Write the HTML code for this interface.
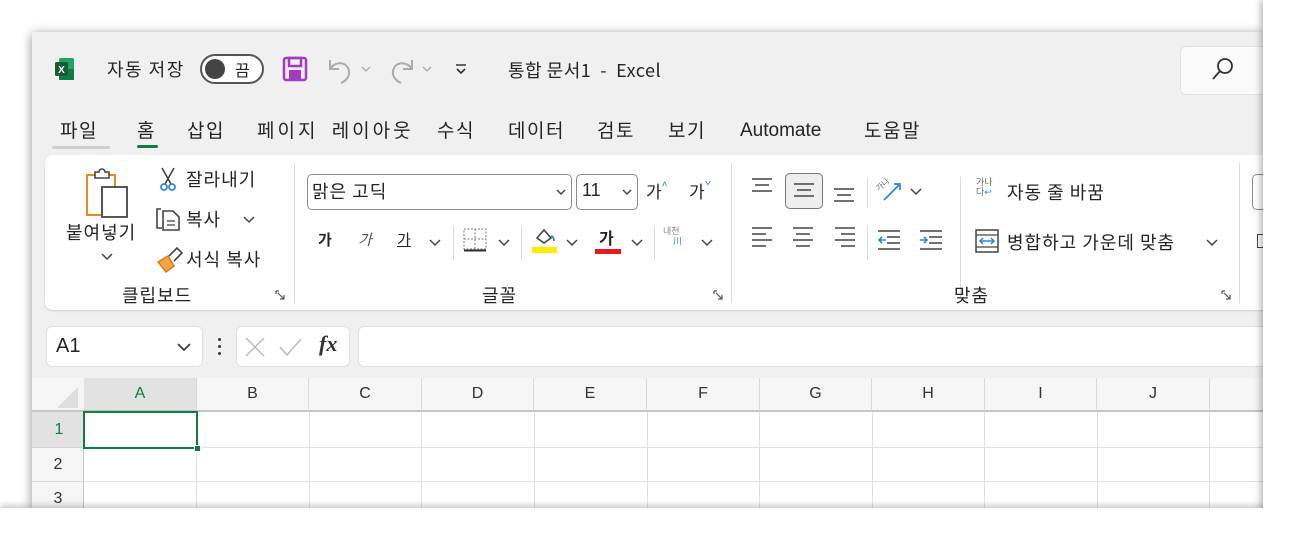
<!DOCTYPE html>
<html><head><meta charset="utf-8"><style>
*{margin:0;padding:0;box-sizing:border-box}
body{width:1295px;height:541px;background:#fff;position:relative;overflow:hidden;font-family:"Liberation Sans","Noto Sans CJK KR",sans-serif;color:#242424}
.a{position:absolute;white-space:nowrap}
.win{position:absolute;left:32px;top:32px;width:1231px;height:476px;background:#f0f0f0;box-shadow:0 2px 10px rgba(0,0,0,.45);overflow:hidden}
.k{font-family:"Noto Sans CJK KR","Liberation Sans",sans-serif}
.t{font-size:19px;top:116px;letter-spacing:1.5px}
.rib{position:absolute;left:45px;top:155px;width:1240px;height:155px;background:#fff;border-radius:8px;box-shadow:0 1px 2px rgba(0,0,0,.15)}
.sep{position:absolute;width:1px;background:#dcdcdc}
.lbl{font-size:18px;top:282px;letter-spacing:1px}
.l16{font-size:18px;letter-spacing:1px}
.col{position:absolute;top:378px;height:34px;border-right:1px solid #d8d8d8;text-align:center;line-height:32px;font-size:16px;color:#333;background:#f5f5f5;border-bottom:2px solid #c6c6c6}
.vl{position:absolute;top:412px;height:96px;width:1px;background:#e1e1e1}
.hl{position:absolute;left:84px;width:1180px;height:1px;background:#e1e1e1}
</style></head><body>
<div class="win"></div>
<!-- title bar -->
<svg class="a" style="left:55px;top:57px" width="20" height="24" viewBox="0 0 20 24"><rect x="4" y="1" width="15" height="22" rx="2" fill="#21a366"/><rect x="4" y="12" width="15" height="11" fill="#107c41"/><rect x="0" y="5" width="13" height="14" rx="1.5" fill="#185c37"/><text x="6.5" y="16" font-size="10" fill="#fff" text-anchor="middle" font-family="Liberation Sans" font-weight="bold">X</text></svg>
<div class="a k" style="left:107px;top:56px;font-size:18px;letter-spacing:1.5px">자동 저장</div>
<div class="a" style="left:200px;top:54px;width:64px;height:30px;border:2px solid #555;border-radius:15px;background:#fff"></div>
<div class="a" style="left:205px;top:59px;width:20px;height:20px;border-radius:10px;background:#444"></div>
<div class="a k" style="left:235px;top:57px;font-size:16px">끔</div>
<svg class="a" style="left:282px;top:56px" width="26" height="26" viewBox="0 0 26 26"><rect x="2" y="2" width="22" height="22" rx="2" fill="none" stroke="#a33bbd" stroke-width="2.5"/><rect x="7" y="2" width="12" height="8" fill="none" stroke="#a33bbd" stroke-width="2.5"/><rect x="7" y="14" width="12" height="10" fill="#a33bbd"/></svg>
<svg class="a" style="left:326px;top:56px" width="30" height="28" viewBox="0 0 30 28"><path d="M4 4v9h9" fill="none" stroke="#aaa" stroke-width="2"/><path d="M4 13c5-8 17-8 19 2c1 5-3 10-8 12" fill="none" stroke="#aaa" stroke-width="2"/></svg>
<svg class="a" style="left:361px;top:66px" width="10" height="7"><path d="M1 1l4 4 4-4" fill="none" stroke="#aaa" stroke-width="1.3"/></svg>
<svg class="a" style="left:386px;top:56px" width="30" height="28" viewBox="0 0 30 28"><path d="M26 4v9h-9" fill="none" stroke="#aaa" stroke-width="2"/><path d="M26 13c-5-8-17-8-19 2c-1 5 3 10 8 12" fill="none" stroke="#aaa" stroke-width="2"/></svg>
<svg class="a" style="left:422px;top:66px" width="10" height="7"><path d="M1 1l4 4 4-4" fill="none" stroke="#aaa" stroke-width="1.3"/></svg>
<svg class="a" style="left:454px;top:63px" width="14" height="14" viewBox="0 0 14 14"><path d="M2 2h10M3 6l4 4 4-4" fill="none" stroke="#333" stroke-width="1.6"/></svg>
<div class="a k" style="left:508px;top:57px;font-size:18px;letter-spacing:0.5px">통합 문서1 &nbsp;- &nbsp;Excel</div>
<div class="a" style="left:1180px;top:46px;width:100px;height:49px;background:#fafafa;border:1px solid #e2e2e2;border-radius:6px"></div>
<svg class="a" style="left:1210px;top:56px" width="26" height="26" viewBox="0 0 26 26"><circle cx="15" cy="10" r="7" fill="none" stroke="#333" stroke-width="1.8"/><path d="M10 15l-7 8" stroke="#333" stroke-width="1.8"/></svg>
<!-- tabs -->
<div class="a k t" style="left:60px">파일</div>
<div class="a" style="left:52px;top:146px;width:58px;height:3px;background:#cfcfcf;border-radius:2px"></div>
<div class="a k t" style="left:137px">홈</div>
<div class="a" style="left:137px;top:145px;width:21px;height:3px;background:#107c41;border-radius:2px"></div>
<div class="a k t" style="left:187px">삽입</div>
<div class="a k t" style="left:257px;word-spacing:6px;letter-spacing:3px">페이지 레이아웃</div>
<div class="a k t" style="left:437px">수식</div>
<div class="a k t" style="left:508px">데이터</div>
<div class="a k t" style="left:597px">검토</div>
<div class="a k t" style="left:668px">보기</div>
<div class="a t" style="left:740px;top:120px;letter-spacing:0">Automate</div>
<div class="a k t" style="left:864px">도움말</div>
<!-- ribbon -->
<div class="rib"></div>
<div class="sep" style="left:294px;top:163px;height:140px"></div>
<div class="sep" style="left:731px;top:163px;height:140px"></div>
<div class="sep" style="left:960px;top:177px;height:120px"></div>
<div class="sep" style="left:1239px;top:163px;height:140px"></div>
<!-- clipboard -->
<svg class="a" style="left:84px;top:167px" width="48" height="52" viewBox="0 0 48 52"><rect x="3" y="8" width="28" height="40" fill="#fff" stroke="#e98a1e" stroke-width="2"/><path d="M11 8v-3h4a3 3 0 0 1 6 0h4v6h-14z" fill="#fff" stroke="#444" stroke-width="1.6"/><rect x="18" y="20" width="25" height="30" fill="#fff" stroke="#444" stroke-width="1.8"/></svg>
<div class="a k l16" style="left:66px;top:219px">붙여넣기</div>
<svg class="a" style="left:101px;top:253px" width="12" height="8"><path d="M1 1l5 5 5-5" fill="none" stroke="#444" stroke-width="1.5"/></svg>
<svg class="a" style="left:158px;top:166px" width="20" height="26" viewBox="0 0 20 26"><path d="M4 2l9 16M16 2l-9 16" stroke="#444" stroke-width="1.6"/><circle cx="6" cy="21" r="3" fill="none" stroke="#2b88d8" stroke-width="1.8"/><circle cx="14" cy="21" r="3" fill="none" stroke="#2b88d8" stroke-width="1.8"/></svg>
<div class="a k l16" style="left:186px;top:166px">잘라내기</div>
<svg class="a" style="left:155px;top:206px" width="28" height="26" viewBox="0 0 28 26"><path d="M6 3h-4v19h5" fill="none" stroke="#444" stroke-width="1.6"/><path d="M8 5h10l6 6v13h-16z" fill="none" stroke="#444" stroke-width="1.6"/><path d="M12 15h8M12 19h8" stroke="#444" stroke-width="1.3"/></svg>
<div class="a k l16" style="left:186px;top:206px">복사</div>
<svg class="a" style="left:243px;top:216px" width="12" height="8"><path d="M1 1l5 5 5-5" fill="none" stroke="#444" stroke-width="1.5"/></svg>
<svg class="a" style="left:156px;top:246px" width="28" height="28" viewBox="0 0 28 28"><path d="M2 16l10-6 6 10-8 6z" fill="#f3a447" stroke="#e07a0e" stroke-width="1.5"/><path d="M13 10l8-8 5 5-8 8" fill="none" stroke="#444" stroke-width="1.6"/></svg>
<div class="a k l16" style="left:186px;top:246px">서식 복사</div>
<div class="a k lbl" style="left:122px">클립보드</div>
<svg class="a" style="left:275px;top:290px" width="11" height="11"><path d="M1 1h3M1 1v3M3 3l6 6M9 5v4h-4" fill="none" stroke="#555" stroke-width="1.2"/></svg>
<!-- font -->
<div class="a" style="left:307px;top:174px;width:265px;height:36px;border:1px solid #8a8a8a;border-radius:5px"></div>
<div class="a k" style="left:312px;top:178px;font-size:18px;letter-spacing:1px">맑은 고딕</div>
<svg class="a" style="left:556px;top:189px" width="10" height="7"><path d="M1 1l4 4 4-4" fill="none" stroke="#444" stroke-width="1.5"/></svg>
<div class="a" style="left:576px;top:174px;width:62px;height:36px;border:1px solid #8a8a8a;border-radius:5px"></div>
<div class="a" style="left:582px;top:180px;font-size:18px">11</div>
<svg class="a" style="left:622px;top:189px" width="10" height="7"><path d="M1 1l4 4 4-4" fill="none" stroke="#444" stroke-width="1.5"/></svg>
<div class="a k" style="left:646px;top:178px;font-size:17px">가<span style="font-size:11px;color:#2b88d8;vertical-align:8px">^</span></div>
<div class="a k" style="left:689px;top:178px;font-size:17px">가<span style="font-size:11px;color:#2b88d8;vertical-align:8px">ˇ</span></div>
<div class="a k" style="left:318px;top:229px;font-size:15px;font-weight:bold">가</div>
<div class="a k" style="left:358px;top:229px;font-size:15px;font-style:italic;color:#555">가</div>
<div class="a k" style="left:397px;top:229px;font-size:15px;text-decoration:underline">가</div>
<svg class="a" style="left:429px;top:239px" width="12" height="8"><path d="M1 1l5 5 5-5" fill="none" stroke="#444" stroke-width="1.5"/></svg>
<div class="sep" style="left:453px;top:226px;height:34px"></div>
<svg class="a" style="left:463px;top:228px" width="24" height="24" viewBox="0 0 24 24"><rect x="1" y="1" width="22" height="20" fill="none" stroke="#777" stroke-width="1" stroke-dasharray="2 1.5"/><path d="M12 1v20M1 11h22" stroke="#777" stroke-dasharray="2 1.5"/><path d="M1 22.5h22" stroke="#333" stroke-width="2"/></svg>
<svg class="a" style="left:498px;top:239px" width="12" height="8"><path d="M1 1l5 5 5-5" fill="none" stroke="#444" stroke-width="1.5"/></svg>
<div class="sep" style="left:521px;top:226px;height:34px"></div>
<svg class="a" style="left:531px;top:226px" width="28" height="28" viewBox="0 0 28 28"><path d="M6 12l7-8 7 8-7 5z" fill="none" stroke="#444" stroke-width="1.6"/><path d="M20 10c2 0 3 3 3 5" stroke="#2b88d8" stroke-width="1.8" fill="none"/><rect x="1" y="21" width="25" height="6" fill="#ffeb00"/></svg>
<svg class="a" style="left:566px;top:239px" width="12" height="8"><path d="M1 1l5 5 5-5" fill="none" stroke="#444" stroke-width="1.5"/></svg>
<div class="a k" style="left:599px;top:225px;font-size:16px;font-weight:bold">가</div>
<div class="a" style="left:595px;top:249px;width:26px;height:5px;background:#e31b1b"></div>
<svg class="a" style="left:631px;top:239px" width="12" height="8"><path d="M1 1l5 5 5-5" fill="none" stroke="#444" stroke-width="1.5"/></svg>
<div class="sep" style="left:654px;top:226px;height:34px"></div>
<div class="a k" style="left:663px;top:226px;font-size:9px;color:#888;line-height:10px">내천<br><span style="color:#2b88d8;padding-left:10px">川</span></div>
<svg class="a" style="left:701px;top:239px" width="12" height="8"><path d="M1 1l5 5 5-5" fill="none" stroke="#444" stroke-width="1.5"/></svg>
<div class="a k lbl" style="left:482px">글꼴</div>
<svg class="a" style="left:713px;top:290px" width="11" height="11"><path d="M1 1h3M1 1v3M3 3l6 6M9 5v4h-4" fill="none" stroke="#555" stroke-width="1.2"/></svg>
<!-- alignment -->
<svg class="a" style="left:750px;top:176px" width="120" height="80" viewBox="0 0 120 80"><g stroke="#444" stroke-width="1.6"><path d="M2 3h20M5 9h14M2 15h20"/><path d="M84 13h20M87 19h14M84 25h20"/><path d="M2 52h20M2 58h14M2 64h20M2 70h14"/><path d="M43 52h20M46 58h14M43 64h20M46 70h14"/><path d="M85 52h20M91 58h14M85 64h20M91 70h14"/></g></svg>
<div class="a" style="left:785px;top:173px;width:38px;height:36px;border:1.5px solid #777;border-radius:5px;background:#eee"></div>
<svg class="a" style="left:792px;top:181px" width="24" height="20" viewBox="0 0 24 20"><path d="M2 3h20M5 9h14M2 15h20" stroke="#444" stroke-width="1.6"/></svg>
<svg class="a" style="left:876px;top:176px" width="34" height="28" viewBox="0 0 34 28"><text x="0" y="12" font-size="8" fill="#666" transform="rotate(-40 6 10)" font-family="Noto Sans CJK KR">가나</text><path d="M8 24l16-16M18 8h6v6" fill="none" stroke="#2b88d8" stroke-width="1.7"/></svg>
<svg class="a" style="left:910px;top:188px" width="12" height="8"><path d="M1 1l5 5 5-5" fill="none" stroke="#444" stroke-width="1.5"/></svg>
<svg class="a" style="left:876px;top:228px" width="70" height="26" viewBox="0 0 70 26"><g stroke="#444" stroke-width="1.6"><path d="M2 3h22M11 9h13M11 15h13M2 21h22"/><path d="M44 3h22M53 9h13M53 15h13M44 21h22"/></g><path d="M10 12h-7M6 9l-3 3 3 3" stroke="#2b88d8" stroke-width="1.6" fill="none"/><path d="M44 12h7M48 9l3 3-3 3" stroke="#2b88d8" stroke-width="1.6" fill="none"/></svg>
<div class="sep" style="left:867px;top:226px;height:34px"></div>
<div class="sep" style="left:867px;top:178px;height:30px"></div>
<div class="a k" style="left:976px;top:177px;font-size:9px;color:#666;line-height:10px">가나<br>다<span style="color:#2b88d8">↩</span></div>
<div class="a k l16" style="left:1007px;top:179px">자동 줄 바꿈</div>
<svg class="a" style="left:975px;top:229px" width="24" height="24" viewBox="0 0 24 24"><rect x="1" y="1" width="22" height="22" fill="none" stroke="#444" stroke-width="1.5"/><path d="M1 6h22M1 18h22" stroke="#444" stroke-width="1.3"/><path d="M5 12h14M8 9l-3 3 3 3M16 9l3 3-3 3" stroke="#2b88d8" stroke-width="1.5" fill="none"/></svg>
<div class="a k l16" style="left:1007px;top:229px">병합하고 가운데 맞춤</div>
<svg class="a" style="left:1206px;top:239px" width="12" height="8"><path d="M1 1l5 5 5-5" fill="none" stroke="#444" stroke-width="1.5"/></svg>
<div class="a k lbl" style="left:954px">맞춤</div>
<svg class="a" style="left:1221px;top:290px" width="11" height="11"><path d="M1 1h3M1 1v3M3 3l6 6M9 5v4h-4" fill="none" stroke="#555" stroke-width="1.2"/></svg>
<div class="a" style="left:1252px;top:174px;width:20px;height:36px;border:1px solid #8a8a8a;border-radius:5px"></div>
<div class="a" style="left:1257px;top:234px;width:8px;height:14px;border:1.5px solid #444"></div>
<!-- formula bar -->
<div class="a" style="left:46px;top:326px;width:157px;height:41px;background:#fff;border:1px solid #e0e0e0;border-radius:6px"></div>
<div class="a" style="left:56px;top:335px;font-size:20px">A1</div>
<svg class="a" style="left:176px;top:341px" width="16" height="12" viewBox="0 0 16 12"><path d="M2 3l6 6 6-6" fill="none" stroke="#333" stroke-width="1.6"/></svg>
<div class="a" style="left:218px;top:338px;width:3px;height:3px;background:#333;border-radius:2px"></div>
<div class="a" style="left:218px;top:345px;width:3px;height:3px;background:#333;border-radius:2px"></div>
<div class="a" style="left:218px;top:352px;width:3px;height:3px;background:#333;border-radius:2px"></div>
<div class="a" style="left:236px;top:326px;width:114px;height:41px;background:#fff;border:1px solid #e0e0e0;border-radius:6px"></div>
<svg class="a" style="left:244px;top:336px" width="60" height="22" viewBox="0 0 60 22"><path d="M2 2l18 18M20 2l-18 18" stroke="#bbb" stroke-width="1.5"/><path d="M36 11l7 8 14-16" fill="none" stroke="#bbb" stroke-width="1.5"/></svg>
<div class="a" style="left:319px;top:331px;font-size:22px;font-family:'Liberation Serif',serif;font-style:italic;font-weight:bold;color:#333">fx</div>
<div class="a" style="left:358px;top:326px;width:920px;height:41px;background:#fff;border:1px solid #e0e0e0;border-radius:6px"></div>
<!-- grid -->
<div class="a" style="left:32px;top:378px;width:1231px;height:130px;background:#fff"></div>
<div class="a" style="left:32px;top:378px;width:52px;height:34px;background:#f5f5f5;border-bottom:2px solid #c6c6c6"></div>
<svg class="a" style="left:56px;top:385px" width="24" height="24" viewBox="0 0 24 24"><path d="M22 2v21h-21z" fill="#dedede"/></svg>
<div class="col" style="left:84px;width:113px;background:#e2e2e2;color:#107c41;border-bottom-color:#c0c0c0">A</div>
<div class="col" style="left:197px;width:112px">B</div>
<div class="col" style="left:309px;width:113px">C</div>
<div class="col" style="left:422px;width:112px">D</div>
<div class="col" style="left:534px;width:113px">E</div>
<div class="col" style="left:647px;width:113px">F</div>
<div class="col" style="left:760px;width:112px">G</div>
<div class="col" style="left:872px;width:113px">H</div>
<div class="col" style="left:985px;width:112px">I</div>
<div class="col" style="left:1097px;width:113px">J</div>
<div class="col" style="left:1210px;width:60px;text-align:left;padding-left:52px">K</div>
<div class="a" style="left:32px;top:412px;width:52px;height:96px;background:#f5f5f5;border-right:1px solid #c6c6c6"></div>
<div class="a" style="left:32px;top:412px;width:52px;height:36px;background:#e2e2e2;color:#107c41;font-size:16px;text-align:center;line-height:36px;padding-left:2px">1</div>
<div class="a" style="left:32px;top:448px;width:52px;height:34px;font-size:16px;text-align:center;line-height:34px;color:#333">2</div>
<div class="a" style="left:32px;top:482px;width:52px;height:34px;font-size:16px;text-align:center;line-height:34px;color:#333">3</div>
<div class="a" style="left:32px;top:447px;width:52px;height:1px;background:#d6d6d6"></div>
<div class="a" style="left:32px;top:481px;width:52px;height:1px;background:#d6d6d6"></div>
<div class="vl" style="left:196px"></div><div class="vl" style="left:309px"></div><div class="vl" style="left:421px"></div><div class="vl" style="left:534px"></div><div class="vl" style="left:647px"></div><div class="vl" style="left:759px"></div><div class="vl" style="left:872px"></div><div class="vl" style="left:984px"></div><div class="vl" style="left:1097px"></div><div class="vl" style="left:1209px"></div>
<div class="hl" style="top:447px"></div><div class="hl" style="top:481px"></div>
<div class="a" style="left:83px;top:411px;width:115px;height:38px;border:2px solid #107c41"></div>
<div class="a" style="left:194px;top:445px;width:7px;height:7px;background:#107c41;border:1px solid #fff"></div>
<div class="a" style="left:1263px;top:0;width:40px;height:541px;background:#fff;box-shadow:-3px 0 6px rgba(0,0,0,.25)"></div>
<div class="a" style="left:0;top:508px;width:1295px;height:40px;background:#fff;box-shadow:0 -3px 6px rgba(0,0,0,.2)"></div>
<div class="a" style="left:1263px;top:0;width:40px;height:541px;background:#fff"></div>
<div class="a" style="left:0;top:508px;width:1295px;height:40px;background:#fff"></div>
</body></html>
